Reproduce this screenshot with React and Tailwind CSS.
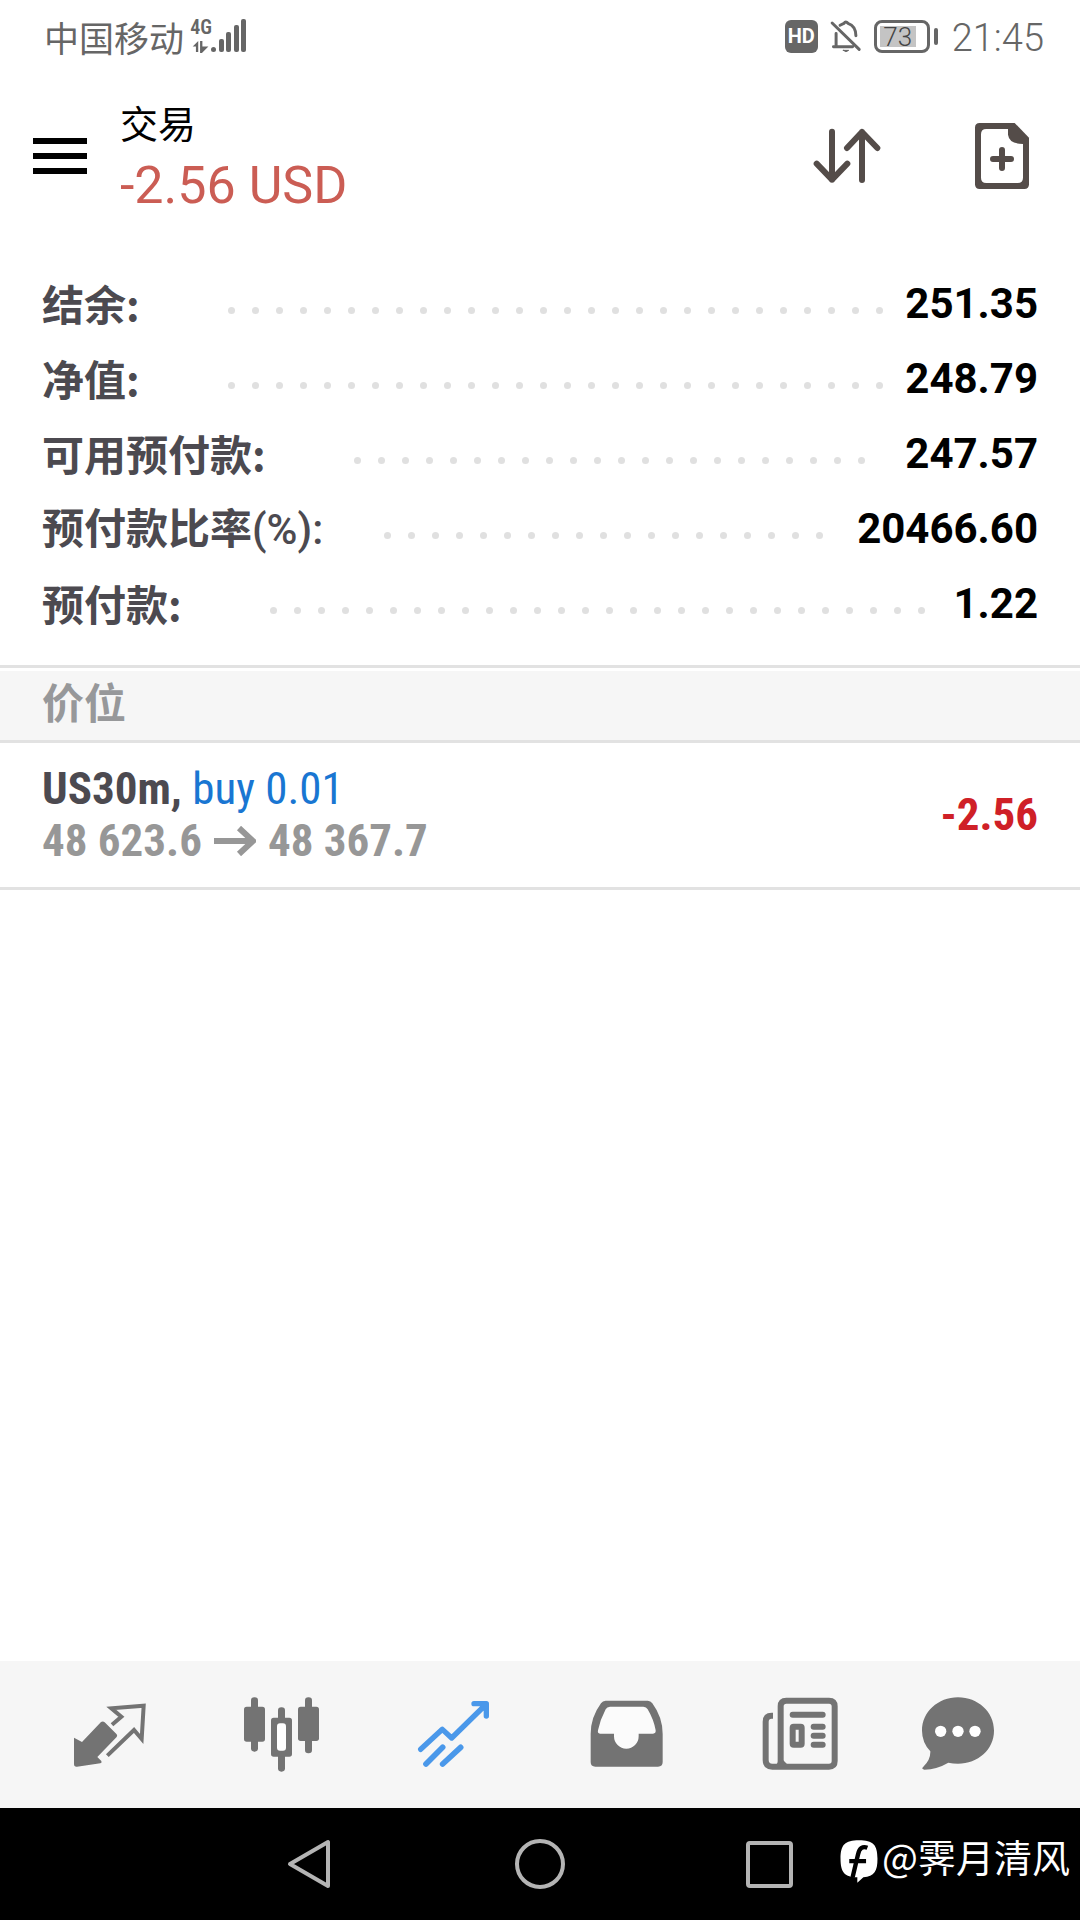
import React, { useState } from "react";

const account = [
  { label: "结余", suffix: ":", value: "251.35" },
  { label: "净值", suffix: ":", value: "248.79" },
  { label: "可用预付款", suffix: ":", value: "247.57" },
  { label: "预付款比率", suffix: "(%):", value: "20466.60", percent: true },
  { label: "预付款", suffix: ":", value: "1.22" },
];

const positions = [
  {
    symbol: "US30m",
    side: "buy",
    volume: "0.01",
    open: "48 623.6",
    current: "48 367.7",
    profit: "-2.56",
  },
];

const QuotesIcon = () => (
  <svg viewBox="66 109 288 288" className="size-24" fill="currentColor">
    <path d="M183 214q6-4 11 1l36 36q3 4 0 8l-58 60 12 12q3 5-3 7l-70 10q-9 1-9-8v-79l24 13z" />
    <path
      d="M216 222l28-24-30-25 97-8-6 100-23-27-80 77"
      fill="none"
      stroke="currentColor"
      strokeWidth="12"
    />
  </svg>
);

const ChartIcon = () => (
  <svg viewBox="582 109 288 288" className="size-24" fill="currentColor">
    <rect x="633" y="140" width="21" height="163" rx="10" />
    <rect x="612" y="168" width="63" height="105" rx="8" />
    <rect x="795" y="140" width="21" height="168" rx="10" />
    <rect x="774" y="168" width="63" height="103" rx="8" />
    <rect x="714" y="170" width="21" height="193" rx="10" />
    <rect x="693" y="201" width="63" height="117" rx="8" />
    <rect x="711" y="218" width="27" height="82" rx="9" fill="#fff" />
  </svg>
);

const TradeIcon = () => (
  <svg
    viewBox="78 109 288 288"
    className="size-24"
    fill="none"
    stroke="currentColor"
    strokeWidth="16"
    strokeLinecap="round"
    strokeLinejoin="round"
  >
    <path d="M122 296l65-60 28 26 98-96M282 159h37v37" />
    <path d="M304 165l15-6v22z" fill="currentColor" strokeWidth="10" />
    <path d="M138 340l50-50M188 340l54-50" strokeWidth="17" />
  </svg>
);

const HistoryIcon = () => (
  <svg viewBox="594 109 288 288" className="size-24">
    <path
      d="M677 150h126q9 0 14 8 31 42 31 92v84q0 14-14 14H646q-14 0-14-14v-84q0-50 31-92 5-8 14-8z"
      fill="currentColor"
    />
    <path
      d="M690 168h100q9 0 13 8 18 30 24 63 1 10-8 10h-43v8a37 37 0 0 1-74 0v-8h-42q-8 0-6-10 7-33 23-63 4-8 13-8z"
      fill="#fbfbfb"
    />
  </svg>
);

const NewsIcon = () => (
  <svg
    viewBox="90 109 288 288"
    className="size-24"
    fill="none"
    stroke="currentColor"
    strokeWidth="18"
  >
    <path d="M159 195h-4q-18 0-18 18v115q0 20 20 20h170q17 0 17-17V167q0-17-17-17H199q-17 0-17 17v165q0 12-9 16" />
    <path d="M181 320v28h28zM345 330v18h-22z" fill="currentColor" stroke="none" />
    <path
      d="M218 192h90M281 228h27M281 255h27M281 282h27"
      strokeLinecap="round"
    />
    <rect x="218" y="228" width="27" height="54" rx="3" />
  </svg>
);

const MessagesIcon = () => (
  <svg viewBox="606 109 288 288" className="size-24">
    <path
      d="M714 140c60 0 108 44 108 100s-48 99-108 99q-15 0-29-3-34 20-72 21-11-2-3-9 22-20 21-46-25-27-25-62c0-56 48-100 108-100z"
      fill="currentColor"
    />
    <g fill="#fff">
      <circle cx="662" cy="242" r="17" />
      <circle cx="714" cy="242" r="17" />
      <circle cx="765" cy="242" r="17" />
    </g>
  </svg>
);

const tabs = [
  { id: "quotes", label: "行情", Icon: QuotesIcon },
  { id: "chart", label: "图表", Icon: ChartIcon },
  { id: "trade", label: "交易", Icon: TradeIcon },
  { id: "history", label: "历史", Icon: HistoryIcon },
  { id: "news", label: "新闻", Icon: NewsIcon },
  { id: "messages", label: "消息", Icon: MessagesIcon },
];

function StatusBar() {
  return (
    <div className="flex h-[72px] items-center justify-between pl-11 pr-9 text-[#666]">
      <div className="flex items-center gap-[7px]">
        <span className="text-[35px] leading-none">中国移动</span>
        <div className="flex items-end">
          <div className="flex h-9 w-5 flex-col items-center justify-between pb-px">
            <span className="font-['Roboto_Condensed',Roboto,sans-serif] text-xl font-semibold leading-[18px]">
              4G
            </span>
            <svg viewBox="0 0 18 13" className="h-3 w-[18px]" fill="currentColor">
              <path d="M0 6l6-6v12H3.500V6zM8 0h2.500v6H17l-7 7H8z" />
            </svg>
          </div>
          <svg viewBox="0 0 36 34" className="h-9 w-9" fill="currentColor">
            <rect x="0" y="28" width="5" height="5" rx="2.500" />
            <rect x="8" y="20" width="5" height="13" rx="2" />
            <rect x="15" y="13" width="5" height="20" rx="2" />
            <rect x="23" y="6" width="5" height="27" rx="2" />
            <rect x="30" y="0" width="5" height="33" rx="2" />
          </svg>
        </div>
      </div>
      <div className="flex items-center gap-3.5">
        <div className="flex items-center gap-3">
          <span className="flex h-[33px] w-[33px] items-center justify-center rounded-md bg-[#666] font-[Roboto] text-xl font-bold text-white">
            HD
          </span>
          <svg
            viewBox="268 60 92 100"
            className="h-[33px] w-8"
            fill="none"
            stroke="currentColor"
            strokeWidth="9"
            strokeLinecap="round"
          >
            <path d="M272 69l82 80M276 141h58M284 137v-36M296 76q8-4 12-6 5-8 12 0 24 8 24 38" />
            <path d="M306 152h16q-8 8-16 0z" fill="currentColor" strokeWidth="3" />
          </svg>
          <div className="flex items-center gap-1">
            <div className="flex h-[33px] w-14 items-center rounded-lg border-3 border-[#666] px-[3px]">
              <span className="h-[21px] w-9 bg-[#c4c4c4] text-center font-[Roboto] text-[26px] font-light leading-[22px] text-[#444]">
                73
              </span>
            </div>
            <span className="h-[17px] w-1 rounded-sm bg-[#666]" />
          </div>
        </div>
        <span className="pt-1 font-[Roboto] text-[38px] font-light leading-none">
          21:45
        </span>
      </div>
    </div>
  );
}

function Header() {
  return (
    <header className="flex h-[168px] items-center justify-between pl-[33px] pr-[50px]">
      <div className="flex items-center gap-[33px]">
        <button aria-label="菜单" className="flex w-[54px] flex-col gap-[9px]">
          <span className="h-1.5 w-full bg-black" />
          <span className="h-1.5 w-full bg-black" />
          <span className="h-1.5 w-full bg-black" />
        </button>
        <div className="pb-1">
          <h1 className="mb-1 text-[38px] leading-[60px] text-black">交易</h1>
          <p className="font-[Roboto] text-[52px] leading-[60px] text-[#cb5d54]">
            -2.56 USD
          </p>
        </div>
      </div>
      <div className="flex items-center gap-[93px] text-[#544c49]">
        <button aria-label="排序">
          <svg
            viewBox="216 366 204 204"
            className="size-[68px]"
            fill="none"
            stroke="currentColor"
            strokeWidth="18"
            strokeLinecap="round"
            strokeLinejoin="round"
          >
            <path d="M273 395v144M227 491l46 48 46-48M363 540V396M318 444l45-48 46 48" />
          </svg>
        </button>
        <button aria-label="新订单">
          <svg viewBox="702 366 168 204" className="h-[68px] w-14">
            <path
              d="M719 369h105l43 44v140q0 14-14 14H719q-14 0-14-14V383q0-14 14-14z"
              fill="currentColor"
            />
            <path
              d="M739 387h65v17q4 28 45 28v101q0 16-16 16h-94q-16 0-16-16V403q0-16 16-16z"
              fill="#fff"
            />
            <path
              d="M759 477h54M786 450v54"
              stroke="currentColor"
              strokeWidth="18"
              strokeLinecap="round"
            />
          </svg>
        </button>
      </div>
    </header>
  );
}

// only whole dots are shown, the ones that do not fit wrap and get clipped
function Dots() {
  return (
    <div aria-hidden="true" className="mt-3.5 flex h-6 flex-1 flex-wrap overflow-hidden">
      {Array.from({ length: 60 }, (_, i) => (
        <span key={i} className="flex size-6 items-center justify-center">
          <span className="size-[7px] rounded-full bg-[#e0e0e0]" />
        </span>
      ))}
    </div>
  );
}

function Account() {
  return (
    <dl className="pb-6 pt-[26px] text-[42px] font-bold leading-[60px]">
      {account.map(({ label, suffix, value, percent }) => (
        <div key={label} className="flex h-[75px] items-center gap-3 px-[42px]">
          <dt
            className={
              percent
                ? "mr-10 whitespace-nowrap pb-0.5 text-[#4c4a50]"
                : "mr-17 whitespace-nowrap pb-0.5 text-[#4c4a50]"
            }
          >
            {label}
            <span className={percent ? "font-[Roboto] font-medium" : "font-bold"}>
              {suffix}
            </span>
          </dt>
          <Dots />
          <dd className="font-[Roboto] text-black">{value}</dd>
        </div>
      ))}
    </dl>
  );
}

function Positions() {
  return (
    <section>
      <div className="border-t-3 border-[#e2e2e2] pt-[3px]">
        <h2 className="h-[72px] border-b-3 border-[#e2e2e2] bg-[#f6f6f6] px-[42px] text-[42px] font-bold leading-[60px] text-[#97989a]">
          价位
        </h2>
      </div>
      <ul>
        {positions.map((p) => (
          <li
            key={p.symbol}
            className="flex h-[147px] items-center justify-between border-b-3 border-[#e2e2e2] px-[42px] font-['Roboto_Condensed',Roboto,sans-serif] text-[45px] font-bold"
          >
            <div className="leading-[52px]">
              <p className="text-[#4c4a50]">
                {p.symbol},{" "}
                <span className="font-normal text-[#1976d2]">
                  {p.side} {p.volume}
                </span>
              </p>
              <p className="flex items-center gap-3 text-[#979797]">
                {p.open}
                <svg
                  viewBox="0 0 42 30"
                  className="h-[30px] w-[42px]"
                  fill="none"
                  stroke="currentColor"
                  strokeWidth="6"
                >
                  <path d="M0 15h39M25 2l14 13-14 13" />
                </svg>
                {p.current}
              </p>
            </div>
            <span className="text-[#cf2027]">{p.profit}</span>
          </li>
        ))}
      </ul>
    </section>
  );
}

function SystemNav() {
  return (
    <div className="relative h-28 bg-black">
      <div className="mx-auto flex h-full w-[64%] items-center text-[#b4b4b4]">
        <button aria-label="返回" className="flex flex-1 justify-center">
          <svg viewBox="0 0 56 56" className="size-14" fill="none" stroke="currentColor" strokeWidth="4" strokeLinejoin="round">
            <path d="M8 28L46 6v44z" />
          </svg>
        </button>
        <button aria-label="主页" className="flex flex-1 justify-center">
          <svg viewBox="0 0 56 56" className="size-14" fill="none" stroke="currentColor" strokeWidth="4">
            <circle cx="28" cy="28" r="23" />
          </svg>
        </button>
        <button aria-label="最近任务" className="flex flex-1 justify-center">
          <svg viewBox="0 0 56 56" className="size-14" fill="none" stroke="currentColor" strokeWidth="4">
            <rect x="6" y="7" width="43" height="43" rx="2" />
          </svg>
        </button>
      </div>
      <div className="absolute right-2.5 top-7 flex items-start gap-1 text-white">
        <svg viewBox="415 120 112 128" className="mt-1 h-[43px] w-[38px]">
          <path
            d="M471 121c42 0 55 13 55 55 0 37-9 52-42 55l-18 16v-16c-37 0-50-13-50-55s13-55 55-55z"
            fill="currentColor"
          />
          <path
            d="M496 143q-22-8-28 20l-16 68M442 183h50"
            fill="none"
            stroke="#000"
            strokeWidth="13"
          />
        </svg>
        <span className="text-[38px] leading-10">@霁月清风</span>
      </div>
    </div>
  );
}

export default function App() {
  const [active, setActive] = useState("trade");

  return (
    <div className="flex min-h-screen flex-col bg-white font-['Noto_Sans_CJK_SC',sans-serif]">
      <StatusBar />
      <Header />
      <main className="flex-1">
        <Account />
        <Positions />
      </main>
      <nav className="flex h-[147px] items-center bg-[#f6f6f6] px-6">
        {tabs.map(({ id, label, Icon }) => (
          <button
            key={id}
            aria-label={label}
            onClick={() => setActive(id)}
            className={
              active === id
                ? "flex flex-1 justify-center text-[#4a98ea]"
                : "flex flex-1 justify-center text-[#737373]"
            }
          >
            <Icon />
          </button>
        ))}
      </nav>
      <SystemNav />
    </div>
  );
}
